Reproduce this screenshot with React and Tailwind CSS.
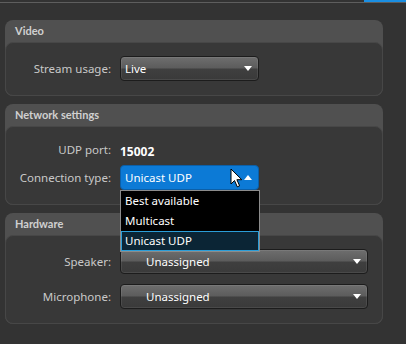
import React from 'react';

const font = { fontFamily: '"Segoe UI", "Noto Sans", "Open Sans", sans-serif' };

function Caret({ up }) {
  return (
    <svg width="8" height="5" viewBox="0 0 8 5" className="shrink-0">
      {up ? <path d="M0 5 L4 0 L8 5 Z" fill="#fff" /> : <path d="M0 0 L8 0 L4 5 Z" fill="#fff" />}
    </svg>
  );
}

function Dropdown({ value, wide, indent }) {
  return (
    <div
      className={`flex h-[25px] items-center justify-between rounded-[4px] border border-[#1c1c1c] bg-[linear-gradient(to_bottom,#6e6e6e_0%,#5c5c5c_48%,#3f3f3f_52%,#3a3a3a_100%)] pr-[6px] shadow-[inset_0_0_0_1px_rgba(255,255,255,0.08)] ${wide ? 'w-[248px]' : 'w-[139px]'} ${indent ? 'pl-[25px]' : 'pl-[4px]'}`}
    >
      <span className="text-[11.5px] leading-none text-white">{value}</span>
      <Caret />
    </div>
  );
}

function Row({ label, children, className = '' }) {
  return (
    <div className={`flex items-center ${className}`}>
      <div className="w-[105px] text-right text-[11.5px] text-[#c9c9c9]">{label}</div>
      <div className="ml-[9px]">{children}</div>
    </div>
  );
}

function Panel({ title, children, className = '' }) {
  return (
    <div className={`rounded-[8px] bg-[#505050] ${className}`}>
      <div className="flex h-[22px] items-center pl-[10px] font-['Lato',sans-serif] text-[11px] font-bold text-[#d0d0d0]">{title}</div>
      <div className="rounded-[8px] border border-[#474747] bg-[#383838]">{children}</div>
    </div>
  );
}

function Cursor() {
  return (
    <svg width="13" height="20" viewBox="0 0 13 20" className="absolute left-[110px] top-[3px]">
      <path d="M1 1 L1 16 L4.5 12.5 L7.3 18.8 L9.6 17.8 L6.9 11.7 L11.8 11.7 Z" fill="#fff" stroke="#000" strokeWidth="1" strokeLinejoin="round" />
    </svg>
  );
}

export default function App() {
  return (
    <div className="h-[344px] w-[406px] overflow-hidden bg-[#333333]" style={font}>
      <div className="flex h-[2px] justify-end">
        <div className="h-[2px] w-[42px] bg-[#1a8fe3]" />
      </div>
      <div className="h-[1px] bg-[#5e5e5e]" />
      <div className="flex w-[378px] flex-col gap-[8px] pl-[5px] pt-[17px]">
        <Panel title="Video" className="w-[378px]">
          <div className="pb-[14px] pt-[13px]">
            <Row label="Stream usage:">
              <Dropdown value="Live" />
            </Row>
          </div>
        </Panel>

        <Panel title="Network settings" className="relative z-10 w-[378px]">
          <div className="pb-[14px] pt-[10px]">
            <Row label="UDP port:" className="h-[25px]">
              <span className="text-[12px] font-bold text-white">15002</span>
            </Row>
            <Row label="Connection type:" className="mt-[3px]">
              <div className="relative">
                <div className="flex h-[25px] w-[139px] items-center justify-between rounded-[4px] border border-[#0b5fa8] bg-[#0c7ad6] pl-[4px] pr-[6px]">
                  <span className="text-[11.5px] leading-none text-white">Unicast UDP</span>
                  <Caret up />
                </div>
                <Cursor />
                <div className="absolute left-0 top-[25px] w-[140px] border border-[#8c8c8c] bg-black">
                  <div className="flex h-[20px] items-center pl-[4px] text-[11.5px] text-white">Best available</div>
                  <div className="flex h-[20px] items-center pl-[4px] text-[11.5px] text-white">Multicast</div>
                  <div className="flex h-[20px] items-center border border-[#2b9ed8] bg-[#0b2535] pl-[3px] text-[11.5px] text-white">Unicast UDP</div>
                </div>
              </div>
            </Row>
          </div>
        </Panel>

        <Panel title="Hardware" className="w-[378px]">
          <div className="flex flex-col gap-[10px] pb-[14px] pt-[13px]">
            <Row label="Speaker:">
              <Dropdown value="Unassigned" wide indent />
            </Row>
            <Row label="Microphone:">
              <Dropdown value="Unassigned" wide indent />
            </Row>
          </div>
        </Panel>
      </div>
    </div>
  );
}
